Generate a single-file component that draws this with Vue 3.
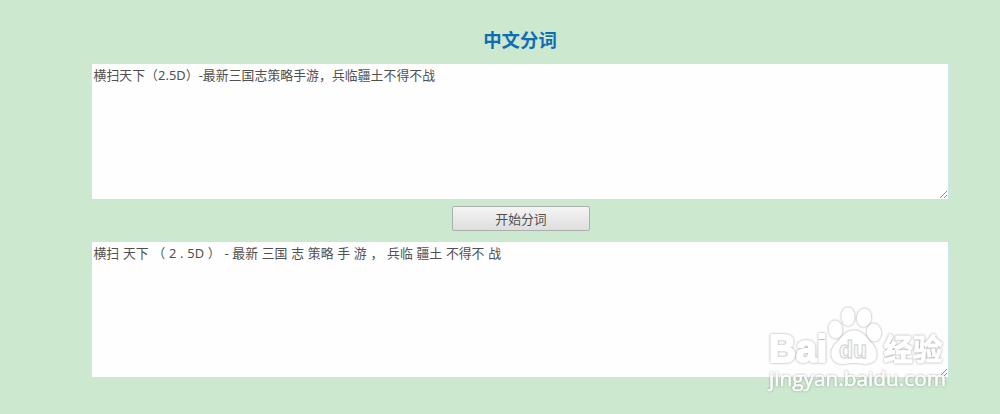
<script setup>

import { ref } from 'vue'

const source = ref('横扫天下（2.5D）-最新三国志策略手游，兵临疆土不得不战');
const result = ref('横扫 天下 （ 2 . 5D ） - 最新 三国 志 策略 手 游 ， 兵临 疆土 不得不 战');

</script>

<template>
  <main class="page">
    <h1 class="title">中文分词</h1>
    <div class="field">
      <textarea v-model="source" class="source" spellcheck="false"></textarea>
      <svg class="grip" viewBox="0 0 9 9"><path d="M1 8L8 1M5 8L8 5" /></svg>
    </div>
    <button class="submit" type="button">开始分词</button>
    <div class="field">
      <textarea v-model="result" class="result" spellcheck="false"></textarea>
      <svg class="grip" viewBox="0 0 9 9"><path d="M1 8L8 1M5 8L8 5" /></svg>
    </div>
    <svg class="watermark" viewBox="0 0 205 105">
      <g class="logo">
        <text class="bai" x="14" y="67" font-size="39" textLength="58" lengthAdjust="spacingAndGlyphs">Bai</text>
        <ellipse cx="80.500" cy="34.500" rx="6.300" ry="8.300" transform="rotate(-8 80.500 34.500)" />
        <ellipse cx="93" cy="21.700" rx="6" ry="8.700" />
        <ellipse cx="109" cy="22.700" rx="6.500" ry="8.500" transform="rotate(8 109 22.700)" />
        <ellipse cx="119" cy="37.500" rx="6.500" ry="8.300" transform="rotate(-8 119 37.500)" />
        <path d="M99 36C92 36 89 40 85 45C80 50 76 54 77 60C78 67 84 69 91 68C97 67 102 67 108 68C116 69 121 66 121 59C121 53 117 50 113 45C109 40 106 36 99 36Z" />
        <text class="cn" x="128.500" y="65" font-size="30" textLength="59" lengthAdjust="spacingAndGlyphs">经验</text>
      </g>
      <text class="du" x="84" y="63" font-size="23" textLength="28" lengthAdjust="spacingAndGlyphs">du</text>
      <text class="site" x="14" y="91" font-size="20" textLength="177" lengthAdjust="spacingAndGlyphs">jingyan.baidu.com</text>
    </svg>
  </main>
</template>

<style>
body {
  background: #cce8cf;
}
</style>

<style scoped>
.page {
  position: relative;
  box-sizing: border-box;
  width: 1000px;
  height: 414px;
  padding: 25px 51px 0 91px;
  overflow: hidden;
  display: flex;
  flex-direction: column;
  align-items: center;
  background: #cce8cf;
  font-family: "Noto Sans", "Noto Sans CJK SC", sans-serif;
}

.title {
  margin: 0 0 9px;
  height: 29px;
  line-height: 29px;
  font-size: 18.4px;
  font-weight: bold;
  color: #0f6db3;
}

.field {
  position: relative;
  width: 858px;
  height: 137px;
}

textarea {
  display: block;
  box-sizing: border-box;
  width: 100%;
  height: 100%;
  margin: 0;
  padding: 1px 1.5px;
  border: 1px solid #c8e4ef;
  outline: none;
  resize: none;
  overflow: hidden;
  background: #fefefe;
  color: #505050;
  font: 12.85px/20px "Noto Sans", "Noto Sans CJK SC", sans-serif;
}

.source {
  letter-spacing: 0.06px;
}

.result {
  word-spacing: 0.42px;
}

.grip {
  position: absolute;
  right: 1px;
  bottom: 1px;
  width: 9px;
  height: 9px;
  fill: none;
  stroke: #8c8c8c;
}

.submit {
  box-sizing: border-box;
  width: 138px;
  height: 25px;
  margin: 6px 0 10px 2px;
  padding: 0;
  border: 1px solid #acb0ac;
  border-radius: 2px;
  background: linear-gradient(#f5f5f5, #dedede);
  color: #505050;
  font: 12.85px/22px "Noto Sans", "Noto Sans CJK SC", sans-serif;
}

.watermark {
  position: absolute;
  left: 755px;
  top: 295px;
  width: 205px;
  height: 105px;
  pointer-events: none;
}

.logo {
  fill: #fff;
  stroke: #fff;
  stroke-width: 1.5;
  stroke-linejoin: round;
  filter: drop-shadow(0 0 1px rgba(80, 80, 80, 0.55));
  font-family: "Liberation Sans", "Noto Sans CJK SC", sans-serif;
  font-weight: bold;
}

.bai {
  stroke-width: 2.2;
}

.cn {
  stroke-width: 1;
}

.du {
  fill: #fff;
  stroke: #d8d8d8;
  stroke-width: 1.3;
  font-family: "Liberation Sans", sans-serif;
  font-weight: bold;
}

.site {
  fill: #fff;
  stroke: #fff;
  stroke-width: 0.5;
  filter: drop-shadow(0 0 1px rgba(80, 80, 80, 0.5));
  font-family: "Open Sans", sans-serif;
}
</style>
